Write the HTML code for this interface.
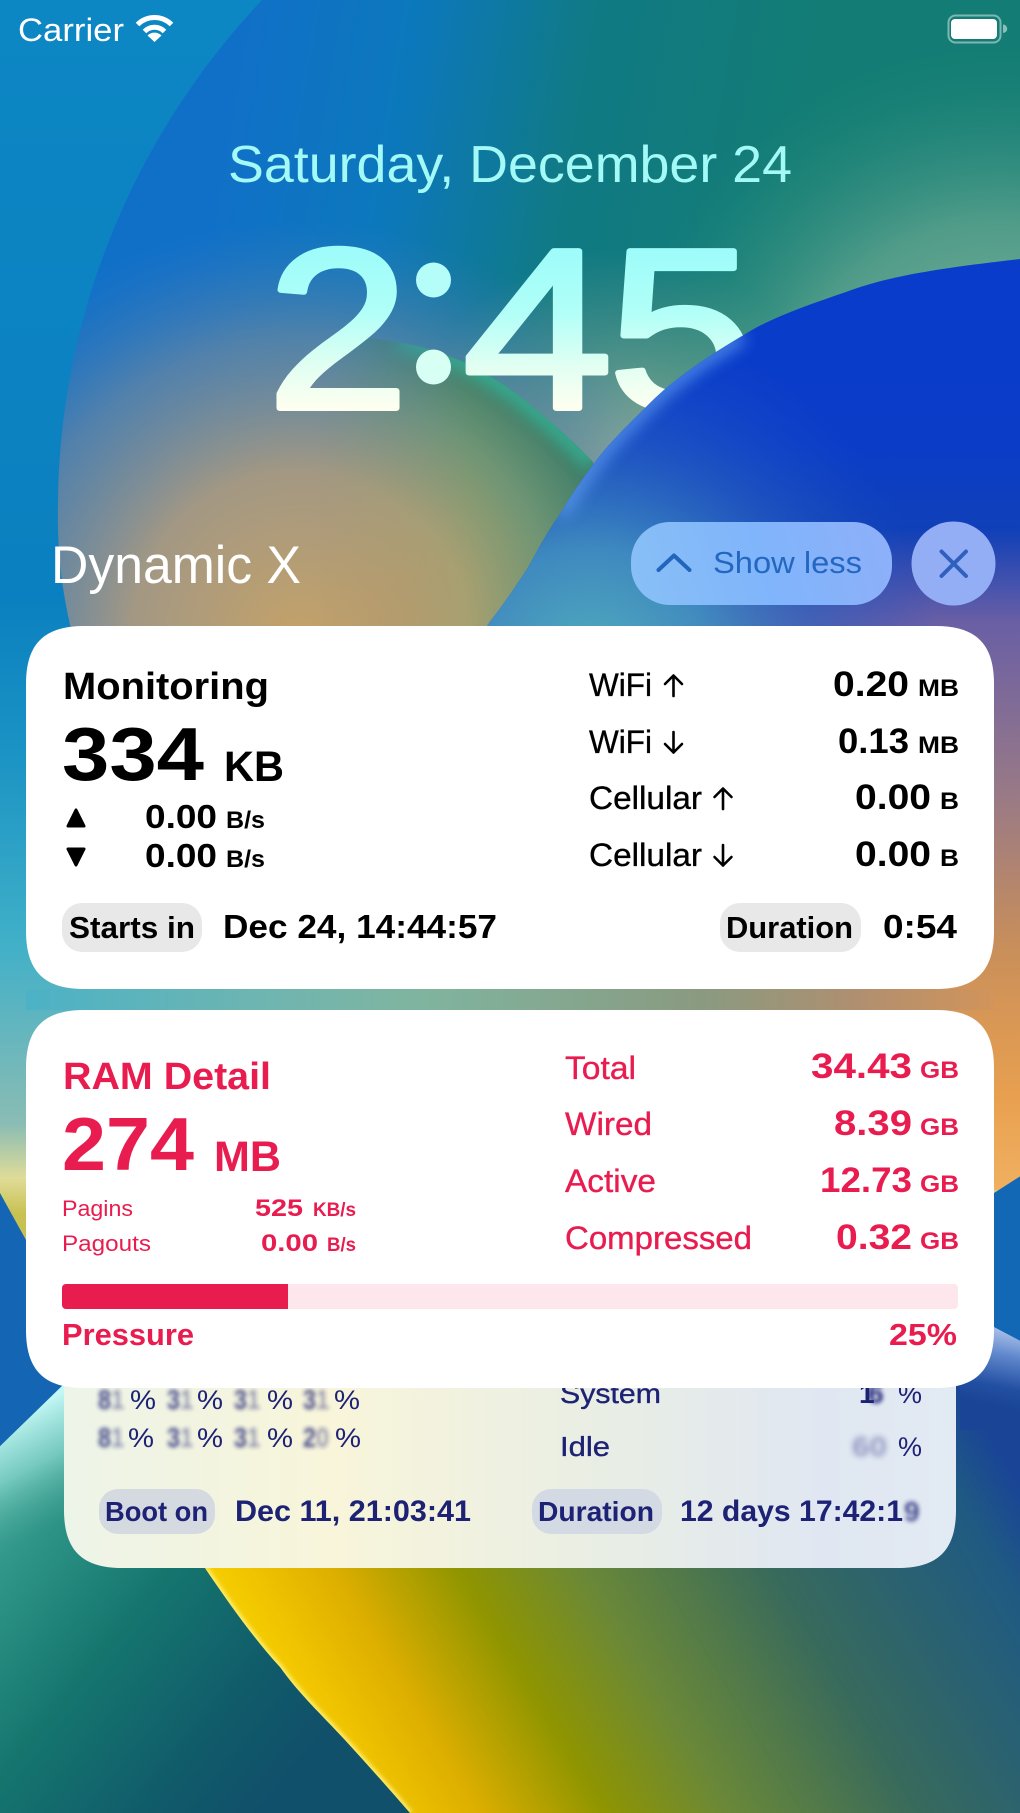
<!DOCTYPE html>
<html lang="en">
<head>
<meta charset="utf-8">
<title>Dynamic X</title>
<style>
html,body{margin:0;padding:0;width:1020px;height:1813px;overflow:hidden;background:#0d86c4}
svg{display:block}
text{font-family:"Liberation Sans",Arial,sans-serif}
.b{font-weight:700}
.k{fill:#000}.r{fill:#e81c4f}.n{fill:#1d2275}
.m{stroke-width:.35px}
.k.m{stroke:#000}.r.m{stroke:#e81c4f}.n.m{stroke:#1d2275}
</style>
</head>
<body>
<svg xmlns="http://www.w3.org/2000/svg" width="1020" height="1813" viewBox="0 0 1020 1813">
<defs>
<linearGradient id="base" x1="0" y1="0" x2="0" y2="1813" gradientUnits="userSpaceOnUse">
<stop offset="0" stop-color="#0d86c4"/><stop offset=".33" stop-color="#0b80c0"/><stop offset=".42" stop-color="#1c94c4"/><stop offset=".52" stop-color="#40b0c8"/><stop offset=".62" stop-color="#8abcb4"/><stop offset=".65" stop-color="#e0dc98"/><stop offset=".67" stop-color="#c8c050"/><stop offset="1" stop-color="#c8c050"/>
</linearGradient>
<linearGradient id="inner" x1="220" y1="120" x2="800" y2="220" gradientUnits="userSpaceOnUse">
<stop offset="0" stop-color="#1070c8"/><stop offset=".3" stop-color="#0c78bc"/><stop offset=".6" stop-color="#107a84"/><stop offset="1" stop-color="#137c74"/>
</linearGradient>
<radialGradient id="glowG" cx="1000" cy="440" r="400" gradientUnits="userSpaceOnUse">
<stop offset="0" stop-color="#a4c8a8" stop-opacity=".95"/><stop offset=".55" stop-color="#70ac94" stop-opacity=".65"/><stop offset="1" stop-color="#1d8a7a" stop-opacity="0"/>
</radialGradient>
<radialGradient id="glowC" cx="620" cy="470" r="220" gradientUnits="userSpaceOnUse">
<stop offset="0" stop-color="#a8b49a" stop-opacity=".95"/><stop offset="1" stop-color="#7aa090" stop-opacity="0"/>
</radialGradient>
<radialGradient id="glowT" cx="300" cy="640" r="420" gradientUnits="userSpaceOnUse">
<stop offset="0" stop-color="#c4a268"/><stop offset=".4" stop-color="#ab9a80" stop-opacity=".95"/><stop offset=".72" stop-color="#6d88a0" stop-opacity=".7"/><stop offset="1" stop-color="#3f7ab8" stop-opacity="0"/>
</radialGradient>
<radialGradient id="sph" cx="340" cy="620" r="300" gradientUnits="userSpaceOnUse">
<stop offset="0" stop-color="#c49a5c"/><stop offset=".42" stop-color="#a8a070"/><stop offset=".72" stop-color="#6f9574"/><stop offset=".93" stop-color="#44806a"/><stop offset="1" stop-color="#3f7f68"/>
</radialGradient>
<linearGradient id="fadeL" x1="320" y1="0" x2="470" y2="0" gradientUnits="userSpaceOnUse">
<stop offset="0" stop-color="#000"/><stop offset="1" stop-color="#fff"/>
</linearGradient>
<mask id="sphMask" maskUnits="userSpaceOnUse" x="0" y="300" width="700" height="400"><rect x="0" y="300" width="700" height="400" fill="url(#fadeL)"/></mask>
<clipPath id="sphClip"><path d="M330 338C360 336 380 339 397 342C450 350 495 375 533 407C555 425 575 443 593 462L640 700L40 700L40 338Z"/></clipPath>
<linearGradient id="blueV" x1="0" y1="260" x2="0" y2="1190" gradientUnits="userSpaceOnUse">
<stop offset="0" stop-color="#0a3ccc"/><stop offset=".2" stop-color="#0a3cc8"/><stop offset=".29" stop-color="#1040b8"/><stop offset=".39" stop-color="#6a5fa5"/><stop offset=".58" stop-color="#9a7a85"/><stop offset=".74" stop-color="#c98f5a"/><stop offset=".9" stop-color="#e8a050"/><stop offset="1" stop-color="#f0b060"/>
</linearGradient>
<radialGradient id="tealA" cx="590" cy="670" r="350" gradientUnits="userSpaceOnUse">
<stop offset="0" stop-color="#50aebc"/><stop offset=".35" stop-color="#3f8cc0" stop-opacity=".95"/><stop offset=".65" stop-color="#2a62c0" stop-opacity=".6"/><stop offset="1" stop-color="#1a4cc4" stop-opacity="0"/>
</radialGradient>
<linearGradient id="band" x1="26" y1="0" x2="994" y2="0" gradientUnits="userSpaceOnUse">
<stop offset="0" stop-color="#4cb2c6"/><stop offset=".25" stop-color="#6fb5b0"/><stop offset=".4" stop-color="#7fb5a0"/><stop offset=".7" stop-color="#8a9a80"/><stop offset=".86" stop-color="#b08f70"/><stop offset="1" stop-color="#d2945a"/>
</linearGradient>
<linearGradient id="low" x1="0" y1="1200" x2="1020" y2="1400" gradientUnits="userSpaceOnUse">
<stop offset="0" stop-color="#1565b5"/><stop offset="1" stop-color="#1268b5"/>
</linearGradient>
<linearGradient id="streak" x1="1005" y1="1328" x2="990" y2="1405" gradientUnits="userSpaceOnUse">
<stop offset="0" stop-color="#aec4ea"/><stop offset=".35" stop-color="#5e86cc"/><stop offset=".75" stop-color="#234fa2"/><stop offset="1" stop-color="#1a4596"/>
</linearGradient>
<linearGradient id="teal" x1="0" y1="1480" x2="320" y2="1740" gradientUnits="userSpaceOnUse">
<stop offset="0" stop-color="#3ca596"/><stop offset=".45" stop-color="#15766e"/><stop offset=".8" stop-color="#105a6a"/><stop offset="1" stop-color="#11506a"/>
</linearGradient>
<linearGradient id="cy" x1="25" y1="1410" x2="80" y2="1515" gradientUnits="userSpaceOnUse">
<stop offset="0" stop-color="#c4f8f6"/><stop offset=".45" stop-color="#86d4cc" stop-opacity=".8"/><stop offset="1" stop-color="#45a08e" stop-opacity="0"/>
</linearGradient>
<linearGradient id="yel" x1="250" y1="1650" x2="950" y2="1230" gradientUnits="userSpaceOnUse">
<stop offset="0" stop-color="#f6cf00"/><stop offset=".05" stop-color="#f0c400"/><stop offset=".14" stop-color="#dcae00"/><stop offset=".27" stop-color="#8f9500"/><stop offset=".4" stop-color="#6a8838"/><stop offset=".6" stop-color="#386a5c"/><stop offset=".84" stop-color="#1f5a82"/><stop offset=".91" stop-color="#1a4596"/><stop offset="1" stop-color="#1a4596"/>
</linearGradient>
<linearGradient id="timeG" x1="0" y1="-177" x2="0" y2="2" gradientUnits="userSpaceOnUse">
<stop offset="0" stop-color="#98fbfa"/><stop offset=".45" stop-color="#b0fff8"/><stop offset=".75" stop-color="#e0fff2"/><stop offset="1" stop-color="#fffff0"/>
</linearGradient>
<linearGradient id="pill" x1="631" y1="605" x2="892" y2="522" gradientUnits="userSpaceOnUse">
<stop offset="0" stop-color="#88c0f6"/><stop offset=".5" stop-color="#80b5fb"/><stop offset="1" stop-color="#8eaffa"/>
</linearGradient>
<linearGradient id="card3" x1="64" y1="0" x2="956" y2="0" gradientUnits="userSpaceOnUse">
<stop offset="0" stop-color="#edf4e8"/><stop offset=".3" stop-color="#f8f5da"/><stop offset=".6" stop-color="#e9eee4"/><stop offset=".85" stop-color="#e0e7f2"/><stop offset="1" stop-color="#e2eaf3"/>
</linearGradient>
<clipPath id="arc"><path d="M262 0C130 140 60 320 58 500C56 580 70 630 90 700L90 1100L1030 1100L1030 0Z"/></clipPath>
<clipPath id="blueClip"><path d="M1020 259C950 267 890 275 846 292C805 306 770 318 742 336C705 358 675 378 650 403C628 425 610 442 595 462C580 482 570 497 560 514C545 535 538 550 527 569C513 590 503 605 491 620L300 900L200 990L200 1190L1030 1190L1030 259Z"/></clipPath>
<clipPath id="yelClip"><path d="M130 1360L205 1568C230 1605 255 1640 280 1667C300 1695 322 1715 345 1740C368 1765 390 1790 410 1813L1030 1813L1030 1380L130 1380Z"/></clipPath>
<filter id="b2" x="-30%" y="-30%" width="160%" height="160%"><feGaussianBlur stdDeviation="2"/></filter>
<filter id="b3" x="-30%" y="-30%" width="160%" height="160%"><feGaussianBlur stdDeviation="3"/></filter>
<filter id="b6" x="-30%" y="-30%" width="160%" height="160%"><feGaussianBlur stdDeviation="7"/></filter>
<filter id="b8" x="-30%" y="-30%" width="160%" height="160%"><feGaussianBlur stdDeviation="8"/></filter>
</defs>

<!-- wallpaper -->
<rect width="1020" height="1813" fill="url(#base)"/>
<g clip-path="url(#arc)">
<rect width="1030" height="1100" fill="url(#inner)"/>
<rect width="1030" height="1100" fill="url(#glowG)"/>
<rect width="1030" height="1100" fill="url(#glowC)"/>
<rect width="1030" height="1100" fill="url(#glowT)"/>
<g mask="url(#sphMask)">
<g clip-path="url(#sphClip)">
<rect x="40" y="330" width="610" height="380" fill="url(#sph)"/>
<path d="M397 342C450 350 495 375 533 407C555 425 575 443 593 462" fill="none" stroke="#34ad92" stroke-width="22" filter="url(#b6)" opacity=".85"/>
</g>
</g>
</g>

<!-- big clock; sits behind the foreground wallpaper shape -->
<g font-size="228" fill="url(#timeG)" stroke="url(#timeG)" stroke-width="6" stroke-linejoin="round">
<text transform="translate(267 408) scale(1.12 1)">2</text>
<text transform="translate(463 408) scale(1.18 1)">4</text>
<text transform="translate(608 408) scale(1.16 1)">5</text>
</g>
<g>
<text transform="translate(400 379) scale(1 .87)" font-size="240" fill="#c4fff6">:</text>
<ellipse cx="433.500" cy="280" rx="17.500" ry="17.500" fill="#b4fdf8"/>
<ellipse cx="433.500" cy="367" rx="17.500" ry="17.500" fill="#d8fff4"/>
</g>

<rect width="1030" height="1190" fill="url(#blueV)" clip-path="url(#blueClip)"/>
<g clip-path="url(#blueClip)">
<rect x="200" y="250" width="830" height="800" fill="url(#tealA)"/>
<path d="M742 336C705 358 675 378 650 403C628 425 610 442 595 462C580 482 570 497 560 514" fill="none" stroke="#5f9cf0" stroke-width="14" filter="url(#b8)" opacity=".85"/>
</g>
<rect x="26" y="989" width="968" height="21" fill="url(#band)"/>

<path d="M-10 1175L26 1240L994 1193L1030 1170L1030 1470L-10 1470Z" fill="url(#low)"/>
<path d="M-10 1456L63 1385L500 1300L500 1813L-10 1813Z" fill="url(#teal)"/>
<path d="M-10 1456L63 1385L130 1385L130 1620L-10 1620Z" fill="url(#cy)"/>
<rect width="1030" height="1813" fill="url(#yel)" clip-path="url(#yelClip)"/>
<path d="M960 1305L994 1327L1030 1346L1030 1430L960 1430Z" fill="url(#streak)"/>
<path d="M205 1568C230 1605 255 1640 280 1667C300 1695 322 1715 345 1740C368 1765 390 1790 410 1813" fill="none" stroke="#fff27a" stroke-width="5" filter="url(#b2)" clip-path="url(#yelClip)"/>

<!-- status bar -->
<text x="18" y="41" font-size="32" fill="#fff" textLength="106" lengthAdjust="spacingAndGlyphs">Carrier</text>
<g fill="none" stroke="#fff" stroke-width="5">
<path d="M137.500 24.500A24 24 0 0 1 171.500 24.500"/>
<path d="M144.500 31.500A14 14 0 0 1 164.500 31.500"/>
</g>
<path d="M154.500 42L147.500 35.500A10 10 0 0 1 161.500 35.500Z" fill="#fff"/>
<rect x="948.500" y="15.500" width="52" height="27" rx="7" fill="none" stroke="#fff" stroke-opacity=".45" stroke-width="2"/>
<rect x="951" y="19" width="46" height="20" rx="4" fill="#fff"/>
<path d="M1003 24.500A4 4 0 0 1 1003 33Z" fill="#fff" fill-opacity=".5"/>

<!-- clock date -->
<text x="228" y="182" font-size="52" fill="#a2f9f6" textLength="564" lengthAdjust="spacingAndGlyphs">Saturday, December 24</text>

<!-- header -->
<text x="51" y="583" font-size="53" fill="#fff" textLength="250" lengthAdjust="spacingAndGlyphs">Dynamic X</text>
<rect x="631" y="522" width="261" height="83" rx="39" fill="url(#pill)"/>
<path d="M658.500 570L674 555.500L689.500 570" fill="none" stroke="#2364bc" stroke-width="4" stroke-linecap="round" stroke-linejoin="round"/>
<text x="713" y="573" font-size="31" fill="#2467c0" textLength="149" lengthAdjust="spacingAndGlyphs">Show less</text>
<circle cx="953.500" cy="563.500" r="42" fill="#94aef6"/>
<path d="M941.500 551.500L966 576M966 551.500L941.500 576" fill="none" stroke="#3060be" stroke-width="4" stroke-linecap="round"/>

<!-- card 3 behind -->
<path d="M64 1300H956V1510C956 1550 938 1568 898 1568H122C82 1568 64 1550 64 1510Z" fill="url(#card3)"/>
<g class="n" fill="#1d2275">
<g class="b" font-size="28" filter="url(#b2)" opacity=".8">
<text x="98" y="1409" textLength="26" lengthAdjust="spacingAndGlyphs">8<tspan fill-opacity=".55">1</tspan></text><text x="167" y="1409" textLength="26" lengthAdjust="spacingAndGlyphs">3<tspan fill-opacity=".55">1</tspan></text><text x="234" y="1409" textLength="26" lengthAdjust="spacingAndGlyphs">3<tspan fill-opacity=".55">1</tspan></text><text x="303" y="1409" textLength="26" lengthAdjust="spacingAndGlyphs">3<tspan fill-opacity=".55">1</tspan></text>
<text x="98" y="1447" textLength="26" lengthAdjust="spacingAndGlyphs">8<tspan fill-opacity=".55">1</tspan></text><text x="167" y="1447" textLength="26" lengthAdjust="spacingAndGlyphs">3<tspan fill-opacity=".55">1</tspan></text><text x="234" y="1447" textLength="26" lengthAdjust="spacingAndGlyphs">3<tspan fill-opacity=".55">1</tspan></text><text x="303" y="1447" textLength="26" lengthAdjust="spacingAndGlyphs">2<tspan fill-opacity=".55">0</tspan></text>
</g>
<g font-size="27">
<text x="130" y="1409" textLength="26" lengthAdjust="spacingAndGlyphs">%</text><text x="197" y="1409" textLength="26" lengthAdjust="spacingAndGlyphs">%</text><text x="267" y="1409" textLength="26" lengthAdjust="spacingAndGlyphs">%</text><text x="334" y="1409" textLength="26" lengthAdjust="spacingAndGlyphs">%</text>
<text x="128" y="1447" textLength="26" lengthAdjust="spacingAndGlyphs">%</text><text x="197" y="1447" textLength="26" lengthAdjust="spacingAndGlyphs">%</text><text x="267" y="1447" textLength="26" lengthAdjust="spacingAndGlyphs">%</text><text x="335" y="1447" textLength="26" lengthAdjust="spacingAndGlyphs">%</text>
</g>
<text x="560" y="1403" font-size="28" class="n m" textLength="101" lengthAdjust="spacingAndGlyphs">System</text>
<text x="859" y="1403" font-size="28" class="b">1</text>
<text x="868" y="1403" font-size="28" class="b" filter="url(#b2)">6</text>
<text x="898" y="1403" font-size="27" textLength="24" lengthAdjust="spacingAndGlyphs">%</text>
<text x="560" y="1456" font-size="28" class="n m" textLength="50" lengthAdjust="spacingAndGlyphs">Idle</text>
<text x="852" y="1456" font-size="28" class="b" filter="url(#b3)" opacity=".4" textLength="35" lengthAdjust="spacingAndGlyphs">60</text>
<text x="898" y="1456" font-size="27" textLength="24" lengthAdjust="spacingAndGlyphs">%</text>
<rect x="99" y="1489" width="116" height="45" rx="19" fill="#d5dae0"/>
<text x="105" y="1521" font-size="28" class="b" textLength="103" lengthAdjust="spacingAndGlyphs">Boot on</text>
<text x="235" y="1521" font-size="30" class="b" textLength="236" lengthAdjust="spacingAndGlyphs">Dec 11, 21:03:41</text>
<rect x="532" y="1489" width="130" height="45" rx="19" fill="#d4dae3"/>
<text x="538" y="1521" font-size="28" class="b" textLength="116" lengthAdjust="spacingAndGlyphs">Duration</text>
<text x="680" y="1521" font-size="30" class="b" textLength="223" lengthAdjust="spacingAndGlyphs">12 days 17:42:1</text>
<text x="904" y="1521" font-size="28" class="b" filter="url(#b2)" opacity=".8">9</text>
</g>

<!-- card 1 -->
<path d="M84 626H936C976 626 994 644 994 684V931C994 971 976 989 936 989H84C44 989 26 971 26 931V684C26 644 44 626 84 626Z" fill="#fff"/>
<g class="k" fill="#000">
<text x="63" y="699" font-size="38" class="b" textLength="206" lengthAdjust="spacingAndGlyphs">Monitoring</text>
<text x="62" y="780" font-size="75" class="b" textLength="142" lengthAdjust="spacingAndGlyphs">334</text>
<text x="224" y="781" font-size="43" class="b" textLength="60" lengthAdjust="spacingAndGlyphs">KB</text>
<path d="M76 810L84 826H68Z" stroke="#000" stroke-width="3" stroke-linejoin="round"/>
<path d="M76 865L84 849H68Z" stroke="#000" stroke-width="3" stroke-linejoin="round"/>
<text x="145" y="828" font-size="33" class="b" textLength="72" lengthAdjust="spacingAndGlyphs">0.00</text>
<text x="226" y="828" font-size="24" class="b" textLength="39" lengthAdjust="spacingAndGlyphs">B/s</text>
<text x="145" y="867" font-size="33" class="b" textLength="72" lengthAdjust="spacingAndGlyphs">0.00</text>
<text x="226" y="867" font-size="24" class="b" textLength="39" lengthAdjust="spacingAndGlyphs">B/s</text>

<text x="589" y="696" font-size="32" class="k m" textLength="63" lengthAdjust="spacingAndGlyphs">WiFi</text>
<text x="589" y="753" font-size="32" class="k m" textLength="63" lengthAdjust="spacingAndGlyphs">WiFi</text>
<text x="589" y="809" font-size="32" class="k m" textLength="113" lengthAdjust="spacingAndGlyphs">Cellular</text>
<text x="589" y="866" font-size="32" class="k m" textLength="113" lengthAdjust="spacingAndGlyphs">Cellular</text>
<g fill="none" stroke="#000" stroke-width="2.600" stroke-linecap="round" stroke-linejoin="round">
<path d="M673.500 696V675.500M665 684L673.500 675.500L682 684"/>
<path d="M673.500 732V752.500M665 744L673.500 752.500L682 744"/>
<path d="M723 809V788.500M714.500 797L723 788.500L731.500 797"/>
<path d="M723 845V865.500M714.500 857L723 865.500L731.500 857"/>
</g>
<text x="833" y="696" font-size="35" class="b" textLength="76" lengthAdjust="spacingAndGlyphs">0.20</text>
<text x="918" y="696" font-size="24" class="b" textLength="41" lengthAdjust="spacingAndGlyphs">MB</text>
<text x="838" y="753" font-size="35" class="b" textLength="71" lengthAdjust="spacingAndGlyphs">0.13</text>
<text x="918" y="753" font-size="24" class="b" textLength="41" lengthAdjust="spacingAndGlyphs">MB</text>
<text x="855" y="809" font-size="35" class="b" textLength="76" lengthAdjust="spacingAndGlyphs">0.00</text>
<text x="940" y="809" font-size="24" class="b" textLength="19" lengthAdjust="spacingAndGlyphs">B</text>
<text x="855" y="866" font-size="35" class="b" textLength="76" lengthAdjust="spacingAndGlyphs">0.00</text>
<text x="940" y="866" font-size="24" class="b" textLength="19" lengthAdjust="spacingAndGlyphs">B</text>

<rect x="62" y="903" width="140" height="49" rx="20" fill="#e8e8e8"/>
<text x="69" y="938" font-size="31" class="b" textLength="126" lengthAdjust="spacingAndGlyphs">Starts in</text>
<text x="223" y="938" font-size="33" class="b" textLength="274" lengthAdjust="spacingAndGlyphs">Dec 24, 14:44:57</text>
<rect x="720" y="903" width="141" height="49" rx="20" fill="#e8e8e8"/>
<text x="726" y="938" font-size="31" class="b" textLength="127" lengthAdjust="spacingAndGlyphs">Duration</text>
<text x="883" y="938" font-size="33" class="b" textLength="74" lengthAdjust="spacingAndGlyphs">0:54</text>
</g>

<!-- card 2 -->
<path d="M84 1010H936C976 1010 994 1028 994 1068V1330C994 1370 976 1388 936 1388H84C44 1388 26 1370 26 1330V1068C26 1028 44 1010 84 1010Z" fill="#fff"/>
<g class="r" fill="#e81c4f">
<text x="63" y="1089" font-size="38" class="b" textLength="208" lengthAdjust="spacingAndGlyphs">RAM Detail</text>
<text x="62" y="1170" font-size="75" class="b" textLength="132" lengthAdjust="spacingAndGlyphs">274</text>
<text x="214" y="1171" font-size="43" class="b" textLength="67" lengthAdjust="spacingAndGlyphs">MB</text>
<text x="62" y="1216" font-size="22" textLength="71" lengthAdjust="spacingAndGlyphs">Pagins</text>
<text x="62" y="1251" font-size="22" textLength="89" lengthAdjust="spacingAndGlyphs">Pagouts</text>
<text x="255" y="1216" font-size="24" class="b" textLength="48" lengthAdjust="spacingAndGlyphs">525</text>
<text x="313" y="1216" font-size="19" class="b" textLength="43" lengthAdjust="spacingAndGlyphs">KB/s</text>
<text x="261" y="1251" font-size="24" class="b" textLength="57" lengthAdjust="spacingAndGlyphs">0.00</text>
<text x="327" y="1251" font-size="19" class="b" textLength="29" lengthAdjust="spacingAndGlyphs">B/s</text>

<text x="565" y="1079" font-size="32" class="r m" textLength="71" lengthAdjust="spacingAndGlyphs">Total</text>
<text x="565" y="1135" font-size="32" class="r m" textLength="87" lengthAdjust="spacingAndGlyphs">Wired</text>
<text x="565" y="1192" font-size="32" class="r m" textLength="91" lengthAdjust="spacingAndGlyphs">Active</text>
<text x="565" y="1249" font-size="32" class="r m" textLength="187" lengthAdjust="spacingAndGlyphs">Compressed</text>
<text x="811" y="1078" font-size="35" class="b" textLength="101" lengthAdjust="spacingAndGlyphs">34.43</text>
<text x="834" y="1135" font-size="35" class="b" textLength="78" lengthAdjust="spacingAndGlyphs">8.39</text>
<text x="820" y="1192" font-size="35" class="b" textLength="92" lengthAdjust="spacingAndGlyphs">12.73</text>
<text x="836" y="1249" font-size="35" class="b" textLength="76" lengthAdjust="spacingAndGlyphs">0.32</text>
<g font-size="24" class="b">
<text x="920" y="1078" textLength="39" lengthAdjust="spacingAndGlyphs">GB</text>
<text x="920" y="1135" textLength="39" lengthAdjust="spacingAndGlyphs">GB</text>
<text x="920" y="1192" textLength="39" lengthAdjust="spacingAndGlyphs">GB</text>
<text x="920" y="1249" textLength="39" lengthAdjust="spacingAndGlyphs">GB</text>
</g>
<rect x="62" y="1284" width="896" height="25" rx="4" fill="#fde7ec"/>
<path d="M66 1284H288V1309H66A4 4 0 0 1 62 1305V1288A4 4 0 0 1 66 1284Z" fill="#e81c4f"/>
<text x="62" y="1345" font-size="31" class="b" textLength="132" lengthAdjust="spacingAndGlyphs">Pressure</text>
<text x="889" y="1345" font-size="31" class="b" textLength="68" lengthAdjust="spacingAndGlyphs">25%</text>
</g>
</svg>
</body>
</html>
